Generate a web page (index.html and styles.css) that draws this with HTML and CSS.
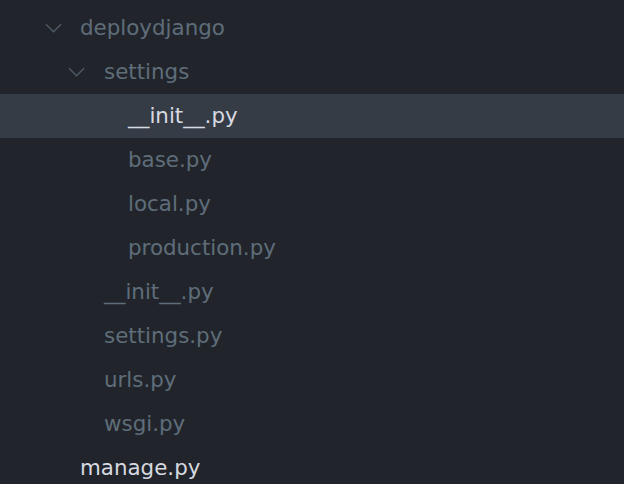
FILE: index.html
```html
<!DOCTYPE html>
<html>
<head>
<meta charset="utf-8">
<link rel="stylesheet" href="styles.css">
</head>
<body>
<ul class="tree">
  <li class="row dir l0"><svg class="chev" viewBox="0 0 18 10"><path d="M1 1 L9 9 L17 1"/></svg><span class="name">deploydjango</span></li>
  <li class="row dir l1"><svg class="chev" viewBox="0 0 18 10"><path d="M1 1 L9 9 L17 1"/></svg><span class="name">settings</span></li>
  <li class="row file l2 selected"><span class="name">__init__.py</span></li>
  <li class="row file l2"><span class="name">base.py</span></li>
  <li class="row file l2"><span class="name">local.py</span></li>
  <li class="row file l2"><span class="name">production.py</span></li>
  <li class="row file l1"><span class="name">__init__.py</span></li>
  <li class="row file l1"><span class="name">settings.py</span></li>
  <li class="row file l1"><span class="name">urls.py</span></li>
  <li class="row file l1"><span class="name">wsgi.py</span></li>
  <li class="row file l0 bright"><span class="name">manage.py</span></li>
</ul>
</body>
</html>
```
FILE: styles.css
```css
html, body {
  margin: 0;
  padding: 0;
  background: #21252b;
  height: 100%;
  overflow: hidden;
}
.tree {
  list-style: none;
  margin: 0;
  padding: 6px 0 0 0;
  font-family: "DejaVu Sans", sans-serif;
  font-size: 21.4px;
  color: #5f6d7a;
}
.row {
  box-sizing: border-box;
  height: 44px;
  padding-bottom: 2px;
  display: flex;
  align-items: center;
}
.row.l0 { padding-left: 80px; }
.row.l1 { padding-left: 104px; }
.row.l2 { padding-left: 128px; }
.row.dir.l0 { padding-left: 45px; }
.row.dir.l1 { padding-left: 68px; }
.chev {
  width: 17px;
  height: 10px;
  margin-right: 18px;
  fill: none;
  stroke: #4e5864;
  stroke-width: 1.6;
}
.dir .chev { margin-top: 2px; }
.dir.l1 .chev { margin-right: 19px; }
.selected {
  background: #363c46;
  color: #d7dae0;
}
.bright { color: #d7dae0; }
```
